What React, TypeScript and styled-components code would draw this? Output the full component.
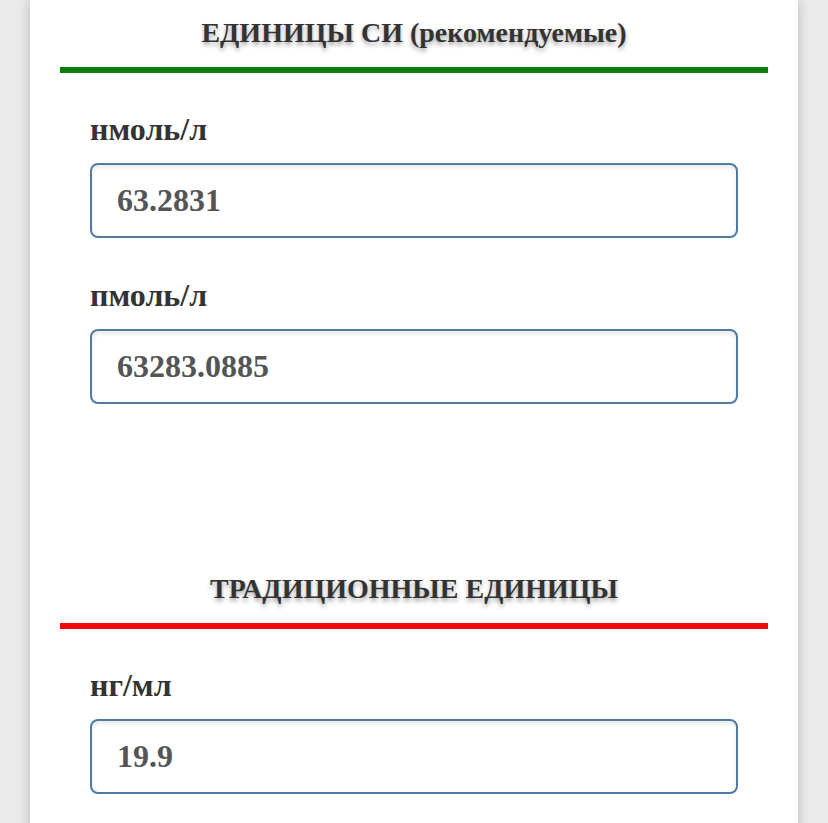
import React from "react";
import styled, { createGlobalStyle } from "styled-components";

const GlobalStyle = createGlobalStyle`
  html, body {
    margin: 0;
    padding: 0;
    background: #ebebeb;
  }
  body {
    font-family: "Liberation Serif", "Times New Roman", serif;
  }
`;

const Page = styled.div`
  padding: 0 30px;
  min-height: 100vh;
  box-sizing: border-box;
`;

const Card = styled.main`
  background: #ffffff;
  min-height: 100vh;
  padding: 19px 30px 60px;
  box-sizing: border-box;
  box-shadow: 0 0 12px rgba(0, 0, 0, 0.22);
`;

const Section = styled.section<{ $gapTop?: number }>`
  display: flex;
  flex-direction: column;
  margin-top: ${(p) => p.$gapTop ?? 0}px;
`;

const Heading = styled.h2`
  margin: 0;
  font-size: 28px;
  line-height: 28px;
  font-weight: 700;
  color: #333333;
  text-align: center;
  text-shadow: 0 3px 4px rgba(0, 0, 0, 0.35);
`;

const Rule = styled.div<{ $color: string }>`
  height: 6px;
  margin-top: 20px;
  background: ${(p) => p.$color};
`;

const Fields = styled.div`
  display: flex;
  flex-direction: column;
  gap: 42px;
  padding: 41px 30px 0;
`;

const Field = styled.label`
  display: flex;
  flex-direction: column;
  gap: 18px;
`;

const LabelText = styled.span`
  font-size: 32px;
  line-height: 31px;
  font-weight: 700;
  color: #333333;
`;

const ValueInput = styled.input`
  box-sizing: border-box;
  width: 100%;
  height: 75px;
  padding: 0 25px;
  border: 2px solid #4f7ba3;
  border-radius: 8px;
  background: #ffffff;
  box-shadow: inset 0 3px 4px rgba(0, 0, 0, 0.08);
  font-family: "Liberation Serif", "Times New Roman", serif;
  font-size: 32px;
  font-weight: 700;
  color: #555555;
  outline: none;
`;

type Unit = { label: string; value: string };

const groups: { title: string; color: string; units: Unit[] }[] = [
  {
    title: "ЕДИНИЦЫ СИ (рекомендуемые)",
    color: "#0b7d0b",
    units: [
      { label: "нмоль/л", value: "63.2831" },
      { label: "пмоль/л", value: "63283.0885" },
    ],
  },
  {
    title: "ТРАДИЦИОННЫЕ ЕДИНИЦЫ",
    color: "#f00a0a",
    units: [{ label: "нг/мл", value: "19.9" }],
  },
];

export default function App() {
  return (
    <>
      <GlobalStyle />
      <Page>
        <Card>
          {groups.map((g, i) => (
            <Section key={g.title} $gapTop={i === 0 ? 0 : 171}>
              <Heading>{g.title}</Heading>
              <Rule $color={g.color} />
              <Fields>
                {g.units.map((u) => (
                  <Field key={u.label}>
                    <LabelText>{u.label}</LabelText>
                    <ValueInput readOnly value={u.value} />
                  </Field>
                ))}
              </Fields>
            </Section>
          ))}
        </Card>
      </Page>
    </>
  );
}
